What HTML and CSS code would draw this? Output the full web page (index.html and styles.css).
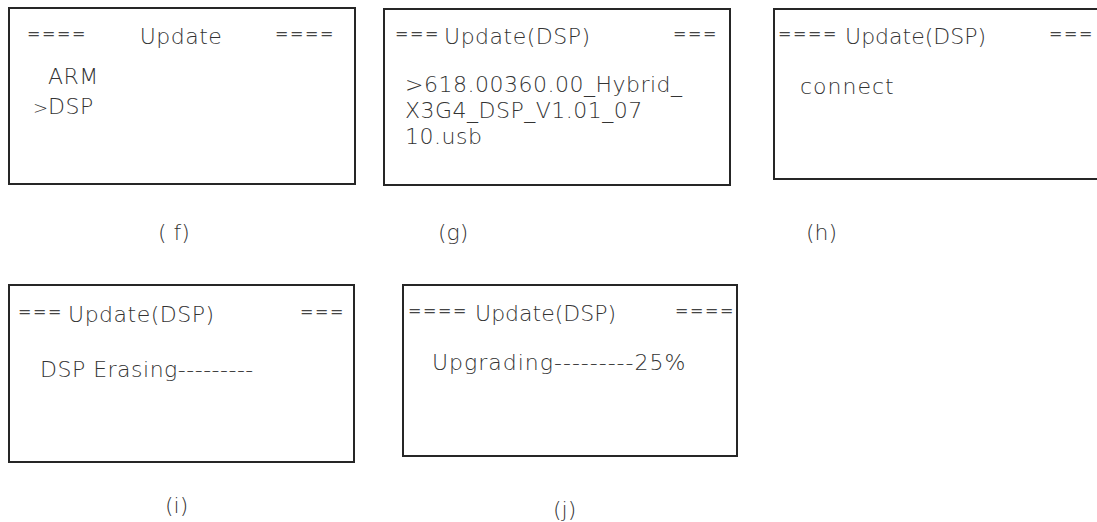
FILE: index.html
```html
<!DOCTYPE html>
<html lang="en">
    <head>
        <meta charset="UTF-8" />
        <title>Update (DSP) screens</title>
        <link rel="stylesheet" href="styles.css">
    </head>
    <body>
        <div class="sheet">
            <div class="row row-top">
                <div class="panel panel-f">
                    <div class="screen">
                        <div class="title spread">
                            <span class="eq">====</span>
                            <span class="name">Update</span>
                            <span class="eq">====</span>
                        </div>
                        <div class="lines">
                            <div><span class="mark"></span>ARM</div>
                            <div><span class="mark">&gt;</span>DSP</div>
                        </div>
                    </div>
                    <div class="caption">( f)</div>
                </div>
                <div class="panel panel-g">
                    <div class="screen">
                        <div class="title">
                            <span class="eq">===</span>
                            <span class="name">Update(DSP)</span>
                            <span class="eq end">===</span>
                        </div>
                        <div class="lines">
                            <div>&gt;618.00360.00_Hybrid_</div>
                            <div>X3G4_DSP_V1.01_07</div>
                            <div>10.usb</div>
                        </div>
                    </div>
                    <div class="caption">(g)</div>
                </div>
                <div class="panel panel-h">
                    <div class="screen">
                        <div class="title">
                            <span class="eq">====</span>
                            <span class="name">Update(DSP)</span>
                            <span class="eq end">===</span>
                        </div>
                        <div class="lines">
                            <div>connect</div>
                        </div>
                    </div>
                    <div class="caption">(h)</div>
                </div>
            </div>
            <div class="row">
                <div class="panel panel-i">
                    <div class="screen">
                        <div class="title">
                            <span class="eq">===</span>
                            <span class="name">Update(DSP)</span>
                            <span class="eq end">===</span>
                        </div>
                        <div class="lines">
                            <div>DSP Erasing---------</div>
                        </div>
                    </div>
                    <div class="caption">(i)</div>
                </div>
                <div class="panel panel-j">
                    <div class="screen">
                        <div class="title">
                            <span class="eq">====</span>
                            <span class="name">Update(DSP)</span>
                            <span class="eq end">====</span>
                        </div>
                        <div class="lines">
                            <div>Upgrading---------25%</div>
                        </div>
                    </div>
                    <div class="caption">(j)</div>
                </div>
            </div>
        </div>
    </body>
</html>
```

FILE: styles.css
```css
body {
    margin: 0;
    background: #fff;
    color: #333;
    font-family: "DejaVu Sans", sans-serif;
    font-weight: 200;
    overflow: hidden;
}
.sheet {
    width: 1097px;
    height: 522px;
    padding-top: 7px;
    box-sizing: border-box;
}
.row {
    display: flex;
    align-items: flex-start;
}
.row-top {
    height: 277px;
}
.panel {
    flex-shrink: 0;
}
.screen {
    border: 2px solid #262626;
    box-sizing: border-box;
    font-size: 22px;
    letter-spacing: 0.5px;
}
.title {
    display: flex;
    align-items: flex-start;
    line-height: 26px;
    white-space: nowrap;
}
.title.spread {
    justify-content: space-between;
}
.eq {
    font-size: 16px;
    font-weight: 400;
    line-height: 18px;
    margin-top: 1px;
    letter-spacing: 1.6px;
    color: #444;
}
.end {
    margin-left: auto;
}
.lines {
    line-height: 26px;
    white-space: nowrap;
}
.mark {
    display: inline-block;
    width: 15px;
    font-size: 18px;
    letter-spacing: 0;
}
.caption {
    font-size: 22px;
    line-height: 24px;
    white-space: pre;
}

/* (f) */
.panel-f {
    width: 348px;
    margin-left: 8px;
}
.panel-f .screen {
    height: 178px;
    padding: 15px 19px 0 17px;
}
.panel-f .lines {
    margin: 12px 0 0 6px;
    line-height: 30px;
}
.panel-f .caption {
    margin-top: 36px;
    padding-left: 150px;
}

/* (g) */
.panel-g {
    width: 348px;
    margin: 1px 0 0 27px;
}
.panel-g .screen {
    height: 178px;
    padding: 14px 11px 0 10px;
}
.panel-g .name {
    margin-left: 4px;
}
.panel-g .lines {
    margin: 22px 0 0 10px;
}
.panel-g .caption {
    margin-top: 35px;
    padding-left: 55px;
}

/* (h) */
.panel-h {
    width: 348px;
    margin: 1px 0 0 42px;
}
.panel-h .screen {
    height: 172px;
    padding: 14px 25px 0 3px;
}
.panel-h .name {
    margin-left: 7px;
    letter-spacing: 0;
}
.panel-h .lines {
    margin: 24px 0 0 22px;
    letter-spacing: 1px;
}
.panel-h .caption {
    margin-top: 41px;
    padding-left: 33px;
}

/* (i) */
.panel-i {
    width: 347px;
    margin-left: 8px;
}
.panel-i .screen {
    height: 179px;
    padding: 16px 8px 0 8px;
}
.panel-i .name {
    margin-left: 5px;
}
.panel-i .lines {
    margin: 29px 0 0 22px;
}
.panel-i .caption {
    margin-top: 31px;
    padding-left: 157px;
}

/* (j) */
.panel-j {
    width: 336px;
    margin-left: 47px;
}
.panel-j .screen {
    height: 173px;
    padding: 15px 1px 0 4px;
}
.panel-j .name {
    margin-left: 7px;
    letter-spacing: 0;
}
.panel-j .lines {
    margin: 23px 0 0 24px;
    letter-spacing: 1px;
}
.panel-j .caption {
    margin-top: 41px;
    padding-left: 151px;
}
```
